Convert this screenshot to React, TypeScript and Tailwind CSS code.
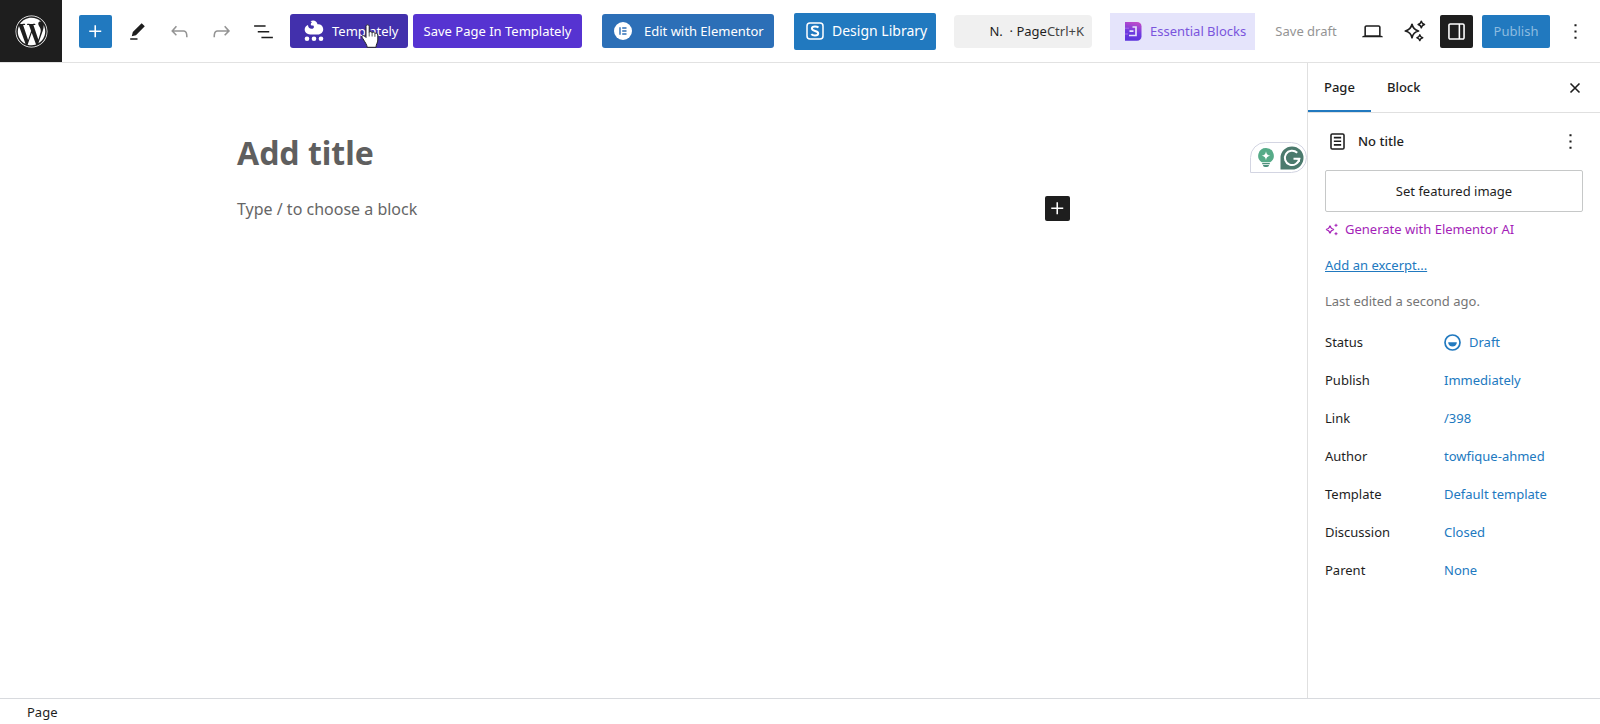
import { useState, type ReactNode } from 'react'
import { clsx } from 'clsx'
import { FaWordpress } from 'react-icons/fa'

const SETTINGS = [
  { label: 'Status', value: 'Draft', draft: true },
  { label: 'Publish', value: 'Immediately' },
  { label: 'Link', value: '/398' },
  { label: 'Author', value: 'towfique-ahmed' },
  { label: 'Template', value: 'Default template' },
  { label: 'Discussion', value: 'Closed' },
  { label: 'Parent', value: 'None' },
]

const TABS = ['Page', 'Block']

interface IconButtonProps {
  label: string
  className?: string
  children: ReactNode
}

function IconButton({ label, className, children }: IconButtonProps) {
  return (
    <button
      aria-label={label}
      className={clsx('flex size-[33px] shrink-0 items-center justify-center rounded-xs', className)}
    >
      {children}
    </button>
  )
}

function PlusIcon() {
  return (
    <svg width="25" height="25" viewBox="0 0 24 24" fill="currentColor">
      <path d="M11 12.5V17.5H12.5V12.5H17.5V11H12.5V6H11V11H6V12.5H11Z" />
    </svg>
  )
}

function MoreIcon() {
  return (
    <svg width="25" height="25" viewBox="0 0 24 24" fill="currentColor">
      <path d="M13 19h-2v-2h2v2zm0-6h-2v-2h2v2zm0-6h-2V5h2v2z" />
    </svg>
  )
}

function PenIcon() {
  return (
    <svg width="25" height="25" viewBox="0 0 24 24" fill="currentColor">
      <path d="m19 7-3-3-8.5 8.5-1 4 4-1L19 7Zm-7 11.5H5V20h7v-1.5Z" />
    </svg>
  )
}

function UndoIcon() {
  return (
    <svg width="25" height="25" viewBox="0 0 24 24" fill="currentColor">
      <path d="M18.3 11.7c-.6-.6-1.4-.9-2.3-.9H6.7l2.9-3.3-1.1-1-4.5 5L8.5 16l1-1-2.7-2.7H16c.5 0 .9.2 1.3.5 1 1 1 3.4 1 4.500v.3h1.500v-.2c0-1.500 0-4.300-1.500-5.700z" />
    </svg>
  )
}

function RedoIcon() {
  return (
    <svg width="25" height="25" viewBox="0 0 24 24" fill="currentColor">
      <path d="M15.6 6.500l-1.100 1 2.900 3.300H8c-.9 0-1.700.3-2.300.9-1.400 1.500-1.400 4.200-1.400 5.600v.2h1.500v-.3c0-1.100 0-3.500 1-4.500.3-.3.7-.5 1.300-.5h9.200L14.500 15l1.100 1.100 4.600-4.600-4.600-5z" />
    </svg>
  )
}

function ListViewIcon() {
  return (
    <svg width="25" height="25" viewBox="0 0 24 24" fill="currentColor">
      <path d="M3 6h11v1.500H3V6Zm3.500 5.500h11V13h-11v-1.500ZM21 17H10v1.500h11V17Z" />
    </svg>
  )
}

function TemplatelyIcon() {
  return (
    <svg width="20" height="22" viewBox="0 0 20 22">
      <path
        d="M6.500 1.300C8.200.2 10.500.3 11.900 1.500c.9.7 1.400 1.700 1.600 2.800 3.100-.4 5.500 1.700 5.700 4.700.1 3.100-2.200 5.500-5.400 5.500H6.200C3 14.500.7 12.400.7 9.600c0-2.300 1.300-4.100 3.300-4.700C4 7.100 5.500 8.900 7.700 8.800c1.300 0 2.200-.8 2.200-1.800s-.7-1.500-1.500-1.400c-1.100 0-1.700-.7-1.600-1.700.1-.7.500-1.200 1.100-1.500-.3-.5-.8-.9-1.400-1.100z"
        fill="currentColor"
      />
      <circle cx="3" cy="18.700" r="2.300" fill="currentColor" />
      <circle cx="10" cy="18.700" r="2.300" fill="currentColor" />
      <circle cx="17" cy="18.700" r="2.300" fill="currentColor" />
    </svg>
  )
}

function ElementorIcon() {
  return (
    <svg width="18" height="18" viewBox="0 0 18 18">
      <circle cx="9" cy="9" r="9" fill="#fff" />
      <path d="M6 5.300v7.400M8.200 6h4.300M8.200 9h4.300M8.200 12h4.300" stroke="#2c6fb7" strokeWidth="1.400" fill="none" />
    </svg>
  )
}

function DesignLibraryIcon() {
  return (
    <svg width="18" height="18" viewBox="0 0 18 18" fill="none" stroke="currentColor">
      <rect x="1" y="1" width="16" height="16" rx="3" strokeWidth="1.500" />
      <path
        d="M12.500 5.600C11.600 4.800 10.400 4.500 9 4.500c-2 0-3.100.8-3.100 2.100 0 3 6.300 1.700 6.300 4.700 0 1.400-1.300 2.300-3.300 2.300-1.500 0-2.800-.5-3.600-1.400"
        strokeWidth="2"
      />
    </svg>
  )
}

function EssentialBlocksIcon() {
  return (
    <svg width="17" height="19" viewBox="0 0 17 19">
      <defs>
        <linearGradient id="eb-fill" x1="0.600" y1="0" x2="0.400" y2="1">
          <stop offset="0" stopColor="#c04bc9" />
          <stop offset="0.550" stopColor="#6f3be0" />
          <stop offset="1" stopColor="#5c33dc" />
        </linearGradient>
      </defs>
      <path d="M0 0h12c2.600 0 4.500 1.800 4.500 4.200v10.300c0 2.500-1.900 4.300-4.500 4.300H0z" fill="url(#eb-fill)" />
      <path d="M7.500 5H11V13.500H4M8.500 9.200H4.500" stroke="#e5e4fb" strokeWidth="1.700" fill="none" />
      <path d="M0 6.200h4M0 12h3" stroke="#a86be6" strokeWidth="1" />
    </svg>
  )
}

function LaptopIcon() {
  return (
    <svg width="25" height="25" viewBox="0 0 24 24" fill="currentColor">
      <path d="M20.500 16h-.7V8c0-1.100-.9-2-2-2H6.200c-1.100 0-2 .9-2 2v8h-.7c-.8 0-1.500.7-1.500 1.500h20c0-.8-.7-1.500-1.500-1.500zM5.700 8c0-.3.2-.5.500-.5h11.600c.3 0 .5.2.5.5v7.600H5.700V8z" />
    </svg>
  )
}

function SparklesIcon() {
  return (
    <svg width="22" height="22" viewBox="0 0 22 22" fill="none" stroke="currentColor" strokeLinejoin="round">
      <path d="M8 4.300c.9 4 2.500 5.700 6.500 6.700-4 1-5.600 2.700-6.500 6.700-.9-4-2.500-5.700-6.700-6.700C5.500 10 7.100 8.300 8 4.300z" strokeWidth="1.700" />
      <path d="M17.300 1.200c.4 2 1.200 2.800 3.200 3.300-2 .5-2.800 1.300-3.200 3.300-.4-2-1.200-2.800-3.200-3.300 2-.5 2.800-1.300 3.200-3.300z" strokeWidth="1.500" />
      <path d="M15.800 14.800c.4 1.800 1.100 2.500 2.900 2.900-1.800.4-2.500 1.100-2.900 2.900-.4-1.800-1.100-2.500-2.900-2.900 1.800-.4 2.500-1.100 2.900-2.900z" strokeWidth="1.500" />
    </svg>
  )
}

function DrawerIcon() {
  return (
    <svg width="25" height="25" viewBox="0 0 24 24" fill="currentColor">
      <path
        fillRule="evenodd"
        d="M18 4H6c-1.100 0-2 .9-2 2v12c0 1.100.9 2 2 2h12c1.100 0 2-.9 2-2V6c0-1.100-.9-2-2-2zm-4 14.500H6c-.3 0-.5-.2-.5-.5V6c0-.3.2-.5.5-.5h8v13zm4.500-.5c0 .3-.2.5-.5.5h-2.500v-13H18c.3 0 .5.2.5.5v12z"
      />
    </svg>
  )
}

function PageIcon() {
  return (
    <svg width="25" height="25" viewBox="0 0 24 24" fill="currentColor">
      <path d="M15.500 7.500h-7V9h7V7.500Zm-7 3.500h7v1.500h-7V11Zm7 3.500h-7V16h7v-1.500Z" />
      <path d="M17 4H7a2 2 0 0 0-2 2v12a2 2 0 0 0 2 2h10a2 2 0 0 0 2-2V6a2 2 0 0 0-2-2ZM7 5.500h10a.5.5 0 0 1 .5.5v12a.5.5 0 0 1-.5.5H7a.5.5 0 0 1-.5-.5V6a.5.5 0 0 1 .5-.5Z" />
    </svg>
  )
}

function CloseIcon() {
  return (
    <svg width="20" height="20" viewBox="0 0 20 20" fill="none" stroke="currentColor" strokeWidth="1.600">
      <path d="M5.500 5.500l9 9M14.500 5.500l-9 9" />
    </svg>
  )
}

function AiIcon() {
  return (
    <svg width="13" height="13" viewBox="0 0 13 13" fill="none" stroke="currentColor">
      <path d="M5 2.500c.5 2.700 1.300 3.500 4 4-2.700.5-3.500 1.300-4 4-.5-2.700-1.300-3.500-4-4 2.700-.5 3.500-1.300 4-4z" strokeWidth="1.200" />
      <path d="M11 .8v3M9.500 2.300h3M11 9.200v3M9.500 10.700h3" strokeWidth="1" />
    </svg>
  )
}

function DraftIcon() {
  return (
    <svg width="17" height="17" viewBox="0 0 17 17">
      <circle cx="8.500" cy="8.500" r="7.500" fill="none" stroke="currentColor" strokeWidth="1.700" />
      <path d="M4.200 8.300h8.600a4.300 4.300 0 0 1-8.600 0z" fill="currentColor" />
    </svg>
  )
}

function IdeaIcon() {
  return (
    <svg width="18" height="21" viewBox="0 0 18 21">
      <path d="M9 1a7.700 7.700 0 0 0-4.200 14.200h8.400A7.700 7.700 0 0 0 9 1z" fill="#56ab88" />
      <path d="M9 4.200c.6 3 1.400 3.900 4.300 4.500-2.900.6-3.700 1.500-4.300 4.500-.6-3-1.400-3.900-4.300-4.500C7.600 8.100 8.400 7.200 9 4.200z" fill="#fff" />
      <path d="M5.200 16h7.600v1.200H5.200zM6 18h6c0 1.300-.8 2-2 2H8c-1.200 0-2-.7-2-2z" fill="#4c8f7c" />
    </svg>
  )
}

function GrammarIcon() {
  return (
    <svg width="24" height="24" viewBox="0 0 24 24">
      <path d="M12 .5A11.500 11.500 0 1 1 12 23.500H.5V12A11.500 11.500 0 0 1 12 .5z" fill="#4b7a6d" />
      <path d="M17.200 6.800A7.200 7.200 0 1 0 19.200 12.800H13.500" stroke="#fff" strokeWidth="2" fill="none" />
      <path d="M16.500 12.800h3l-.5 3" stroke="#fff" strokeWidth="1.500" fill="none" />
    </svg>
  )
}

function HandCursor() {
  return (
    <svg width="18" height="25" viewBox="0 0 18 25" className="pointer-events-none absolute top-2.5 left-[71px]">
      <path
        d="M5 2.500C5 .3 8.200.3 8.200 2.500v6c.5-1.300 2.700-1.200 2.900.4.700-1.100 2.600-.8 2.800.7.800-.9 2.900-.5 2.900 1.400v5c0 2.800-1.800 4.200-1.800 7.300H6.200C6 20.800 4 18.300 2.700 16 1.700 14.200.5 12.900 1 12.100c.7-1 2.400-.6 4 1.400z"
        fill="#fff"
        stroke="#222"
      />
      <path d="M8.200 8.500v4M11.100 9v3.500M13.900 9.800v3" stroke="#555" fill="none" />
    </svg>
  )
}

function Toolbar() {
  return (
    <header className="flex h-[63px] shrink-0 items-center border-b border-[#e2e2e2]">
      <a href="#" aria-label="View pages" className="flex size-[62px] shrink-0 items-center justify-center bg-[#1e1e1e] text-white">
        <FaWordpress size={33} />
      </a>

      <div className="ml-[17px] flex shrink-0 items-center gap-[9px]">
        <IconButton label="Block inserter" className="bg-[#2179bf] text-white"><PlusIcon /></IconButton>
        <IconButton label="Tools"><PenIcon /></IconButton>
        <IconButton label="Undo" className="text-[#949494]"><UndoIcon /></IconButton>
        <IconButton label="Redo" className="text-[#949494]"><RedoIcon /></IconButton>
        <IconButton label="Document overview"><ListViewIcon /></IconButton>
      </div>

      <div className="ml-2.5 flex shrink-0 items-center gap-[5px] text-white">
        <button className="relative flex h-[34px] w-[118px] items-center gap-2 rounded-[3px] bg-[#4230ac] pl-3.5">
          <TemplatelyIcon />
          Templately
          <HandCursor />
        </button>
        <button className="h-[34px] w-[169px] rounded-[3px] bg-[#5633d1]">Save Page In Templately</button>
      </div>

      <button className="ml-5 flex h-[34px] w-[172px] shrink-0 items-center gap-3 rounded-[3px] bg-[#2c6fb7] pl-3 text-white">
        <ElementorIcon />
        Edit with Elementor
      </button>

      <button className="ml-5 flex h-[37px] w-[142px] shrink-0 items-center gap-2 rounded-xs bg-[#2179bf] pl-3 text-sm text-white">
        <DesignLibraryIcon />
        Design Library
      </button>

      <div className="flex min-w-0 flex-1 justify-center">
        <button className="flex h-[33px] w-[138px] items-center justify-end rounded bg-[#f0f0f0] pr-2 whitespace-pre">
          <span>N.  · Page</span>
          <span className="text-[#444]">Ctrl+K</span>
        </button>
      </div>

      <button className="flex h-[37px] w-[145px] shrink-0 items-center gap-2 bg-[#e5e4fb] pl-[15px] text-[#7a55dd]">
        <EssentialBlocksIcon />
        Essential Blocks
      </button>
      <button className="ml-5 w-[62px] shrink-0 whitespace-nowrap text-[#949494]">Save draft</button>
      <div className="ml-[19px] flex shrink-0 items-center gap-[9px] pr-2">
        <IconButton label="View"><LaptopIcon /></IconButton>
        <IconButton label="AI tools"><SparklesIcon /></IconButton>
        <IconButton label="Settings" className="bg-[#1e1e1e] text-white"><DrawerIcon /></IconButton>
        <button className="h-[33px] w-[68px] rounded-xs bg-[#2179bf] text-[#8dbce0]">Publish</button>
        <IconButton label="Options"><MoreIcon /></IconButton>
      </div>
    </header>
  )
}

function Canvas() {
  return (
    <main className="relative min-w-0 flex-1 px-10 pt-[66px]">
      <div className="mx-auto max-w-[833px]">
        <h1 className="text-[32px] leading-[48px] font-bold text-[#5f5f5f]">Add title</h1>
        <div className="mt-[19px] flex h-[25px] items-center justify-between">
          <p className="text-base text-[#666]">Type / to choose a block</p>
          <button aria-label="Add block" className="flex size-[25px] items-center justify-center rounded-xs bg-[#1e1e1e] text-white">
            <PlusIcon />
          </button>
        </div>
      </div>
      <div className="absolute top-[79px] right-0 flex h-[31px] w-[57px] items-center justify-between rounded-2xl rounded-bl-none border border-[#d3d5e2] bg-white pr-0.5 pl-1.5">
        <IdeaIcon />
        <GrammarIcon />
      </div>
    </main>
  )
}

function SettingsSidebar() {
  const [activeTab, setActiveTab] = useState('Page')

  return (
    <aside className="w-[293px] shrink-0 border-l border-[#e0e0e0]">
      <div className="flex h-[50px] items-stretch border-b border-[#e0e0e0] pr-[15px]">
        {TABS.map((tab) => (
          <button
            key={tab}
            onClick={() => setActiveTab(tab)}
            className={clsx(
              'border-b-2 px-4 font-medium',
              activeTab === tab ? 'border-[#2179bf]' : 'border-transparent',
            )}
          >
            {tab}
          </button>
        ))}
        <button aria-label="Close settings" className="ml-auto"><CloseIcon /></button>
      </div>

      <div className="px-[17px] pt-3">
        <div className="flex h-8 items-center">
          <PageIcon />
          <h2 className="ml-2 font-medium">No title</h2>
          <button aria-label="Actions" className="ml-auto"><MoreIcon /></button>
        </div>
        <button className="mt-[13px] h-[42px] w-full rounded-xs border border-[#c6c8c8]">Set featured image</button>
        <button className="mt-[7px] flex h-5 items-center gap-[7px] text-[#a41fb8]">
          <AiIcon />
          Generate with Elementor AI
        </button>
        <a href="#" className="mt-4 block leading-5 text-[#2179bf] underline">Add an excerpt...</a>
        <p className="mt-4 leading-5 text-[#757575]">Last edited a second ago.</p>

        <dl className="mt-3.5 flex flex-col gap-1">
          {SETTINGS.map((row) => (
            <div key={row.label} className="flex h-[34px] items-center">
              <dt className="w-[119px]">{row.label}</dt>
              <dd>
                <button className="flex items-center gap-2 text-[#2179bf]">
                  {row.draft && <DraftIcon />}
                  {row.value}
                </button>
              </dd>
            </div>
          ))}
        </dl>
      </div>
    </aside>
  )
}

export default function App() {
  return (
    <div className="flex min-h-screen flex-col bg-white font-['Noto_Sans',sans-serif] text-[13px] leading-5 text-[#1e1e1e]">
      <Toolbar />
      <div className="flex flex-1">
        <Canvas />
        <SettingsSidebar />
      </div>
      <footer className="flex h-[26px] shrink-0 items-center border-t border-[#d8dade] px-[27px]">Page</footer>
    </div>
  )
}
